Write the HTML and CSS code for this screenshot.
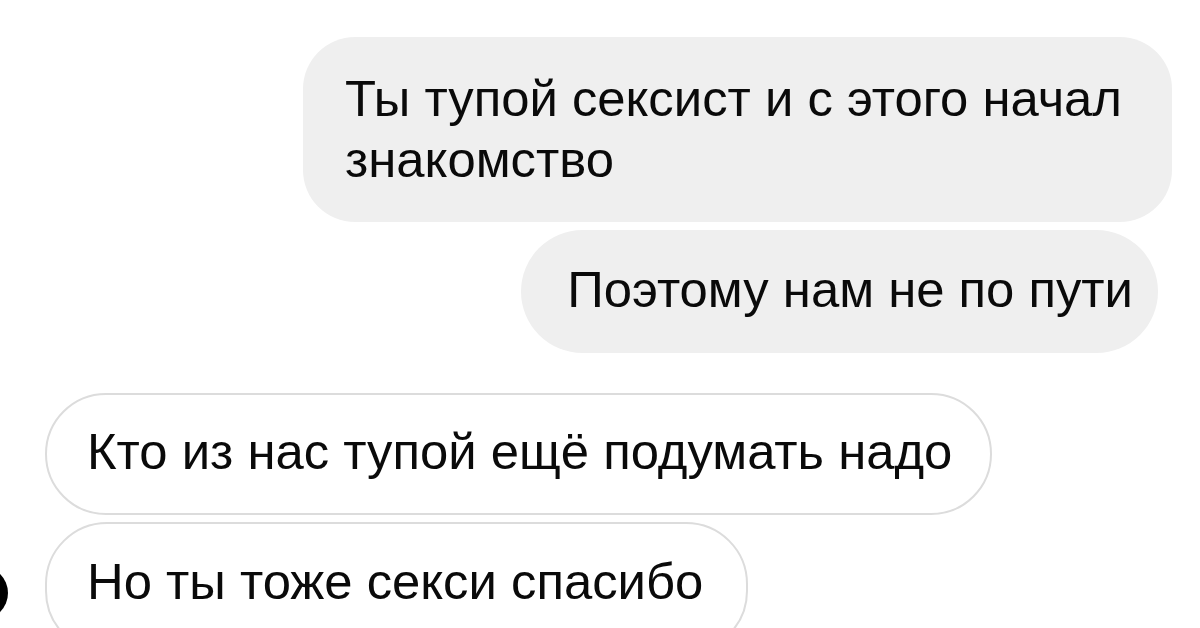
FILE: index.html
```html
<!DOCTYPE html>
<html lang="ru">

<head>
  <meta charset="UTF-8" />
  <meta name="viewport" content="width=device-width, initial-scale=1.0" />
  <title>Переписка</title>
  <link rel="stylesheet" href="styles.css">
</head>

<body>
  <div class="chat">
    <div class="msg out first">
      <p>Ты тупой сексист и с этого начал<br />знакомство</p>
    </div>
    <div class="msg out second">
      <p>Поэтому нам не по пути</p>
    </div>

    <div class="msg in third">
      <p>Кто из нас тупой ещё подумать надо</p>
    </div>
    <div class="row">
      <div class="avatar"></div>
      <div class="msg in fourth">
        <p>Но ты тоже секси спасибо</p>
      </div>
    </div>
  </div>
</body>

</html>
```

FILE: styles.css
```css
body {
  margin: 0;
  background-color: #fff;
  width: 1200px;
  height: 628px;
  overflow: hidden;
  font-family: "Liberation Sans", Arial, sans-serif;
  color: #0a0a0a;
}

.chat {
  display: flex;
  flex-direction: column;
  padding-top: 37px;
}

.msg p {
  margin: 0;
  font-size: 50.8px;
  line-height: 58px;
  white-space: nowrap;
}

.out {
  background-color: #efefef;
  align-self: flex-end;
}

.first {
  margin-right: 28px;
  border-radius: 52px;
  padding: 31px 50px 32px 42px;
}

.first p {
  line-height: 61px;
}

.second {
  margin-top: 8px;
  margin-right: 42px;
  border-radius: 62px;
  padding: 31px 25px 34px 46px;
}

.in {
  background-color: #fff;
  border: 2px solid #dcdcdc;
  border-radius: 62px;
  align-self: flex-start;
  margin-left: 45px;
}

.third {
  margin-top: 40px;
  padding: 28px 38px 32px 40px;
}

.row {
  display: flex;
  align-items: flex-start;
  margin-top: 7px;
  position: relative;
}

.fourth {
  margin-left: 45px;
  padding: 29px 43px 40px 40px;
}

.avatar {
  position: absolute;
  left: -46px;
  top: 44px;
  width: 54px;
  height: 54px;
  border-radius: 50%;
  background-color: #000;
}
```
